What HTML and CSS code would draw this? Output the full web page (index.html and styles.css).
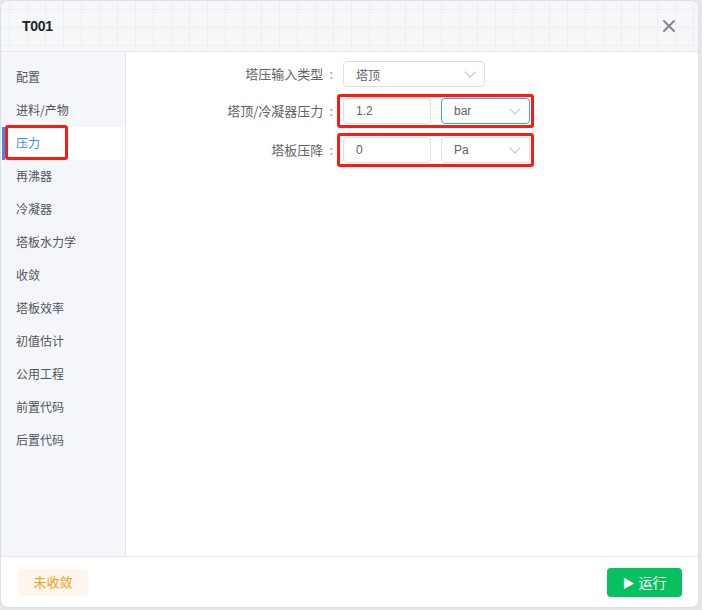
FILE: index.html
```html
<!DOCTYPE html>
<html lang="zh-CN">
<head>
  <meta charset="UTF-8" />
  <title>T001</title>
  <link rel="stylesheet" href="styles.css">
</head>
<body>
  <div class="dialog">
    <div class="dialog-header">
      <span class="title">T001</span>
      <span class="close">
        <svg width="12" height="12" viewBox="0 0 12 12"><path d="M1 1L11 11M11 1L1 11" stroke="#808389" stroke-width="1.8" stroke-linecap="round"/></svg>
      </span>
    </div>

    <div class="dialog-body">
      <ul class="side-menu">
        <li>配置</li>
        <li>进料/产物</li>
        <li class="active">压力<span class="mark mark-menu"></span></li>
        <li>再沸器</li>
        <li>冷凝器</li>
        <li>塔板水力学</li>
        <li>收敛</li>
        <li>塔板效率</li>
        <li>初值估计</li>
        <li>公用工程</li>
        <li>前置代码</li>
        <li>后置代码</li>
      </ul>

      <div class="content">
        <div class="form-row row-type">
          <label class="form-label">塔压输入类型</label>
          <div class="controls">
            <div class="select select-wide">
              <span>塔顶</span>
              <i class="arrow"></i>
            </div>
          </div>
        </div>

        <div class="form-row row-top">
          <label class="form-label">塔顶/冷凝器压力</label>
          <div class="controls marked">
            <div class="input">1.2</div>
            <div class="select focused">
              <span>bar</span>
              <i class="arrow"></i>
            </div>
          </div>
        </div>

        <div class="form-row row-drop">
          <label class="form-label">塔板压降</label>
          <div class="controls marked">
            <div class="input">0</div>
            <div class="select">
              <span>Pa</span>
              <i class="arrow"></i>
            </div>
          </div>
        </div>
      </div>
    </div>

    <div class="dialog-footer">
      <span class="tag-warn">未收敛</span>
      <button class="btn-run"><span class="play">▶</span>运行</button>
    </div>
  </div>
</body>
</html>
```

FILE: styles.css
```css
html, body {
  margin: 0;
  padding: 0;
}

body {
  background: #e6e7ea;
  font-family: "Noto Sans CJK SC", "Liberation Sans", sans-serif;
  width: 702px;
  height: 610px;
}

.dialog {
  width: 697px;
  height: 606px;
  background: #fff;
  border: 1px solid #dcdfe6;
  border-radius: 8px;
  display: flex;
  flex-direction: column;
  overflow: hidden;
}

/* 头部 */
.dialog-header {
  height: 50px;
  flex: none;
  display: flex;
  align-items: center;
  justify-content: space-between;
  padding: 0 23px 0 21px;
  border-bottom: 1px solid #e4e7ed;
  background-color: #f6f7f9;
  background-image:
    linear-gradient(to right, #eceef2 1px, transparent 1px),
    linear-gradient(to bottom, #eceef2 1px, transparent 1px);
  background-size: 18px 18px;
  background-position: 8px 8px;
}

.title {
  font-family: "Liberation Sans", sans-serif;
  font-weight: bold;
  font-size: 14px;
  color: #1d2129;
  letter-spacing: -0.3px;
}

.close {
  display: flex;
  width: 12px;
  height: 12px;
}

/* 主体 */
.dialog-body {
  flex: 1;
  display: flex;
  min-height: 0;
}

.side-menu {
  list-style: none;
  margin: 0;
  padding: 9px 0 0;
  width: 124px;
  flex: none;
  background: #f5f6fa;
  border-right: 1px solid #e4e7ed;
}

.side-menu li {
  position: relative;
  height: 33px;
  line-height: 31px;
  padding-left: 15px;
  font-size: 12px;
  color: #50555e;
}

.side-menu li.active {
  background: #fff;
  color: #3d8cf0;
}

.side-menu li.active::before {
  content: "";
  position: absolute;
  left: 1px;
  top: 0;
  bottom: 0;
  width: 3px;
  background: #3d8cf0;
}

/* 红色标注框 */
.mark {
  position: absolute;
  border: 3px solid #ff1a0f;
  border-radius: 3px;
  pointer-events: none;
}

.mark-menu {
  left: 4px;
  top: -2px;
  width: 57px;
  height: 29px;
}

.content {
  flex: 1;
  padding-top: 3px;
}

.form-row {
  display: flex;
  align-items: center;
}

.row-top { margin-top: 1px; }
.row-drop { margin-top: 5px; }

.form-label {
  width: 207px;
  padding-right: 4px;
  text-align: right;
  font-size: 13px;
  color: #606266;
  flex: none;
  margin-top: -1px;
}

.form-label::after {
  content: ":";
  margin-left: 6px;
  color: #909399;
}

.controls {
  display: flex;
  gap: 10px;
  padding: 3px 1px 3px 3px;
  border: 3px solid transparent;
  border-radius: 3px;
}

.controls.marked {
  border-color: #ff1a0f;
  padding-top: 1px;
  padding-bottom: 1px;
}

.input, .select {
  box-sizing: border-box;
  height: 26px;
  border: 1px solid #dcdfe6;
  border-radius: 4px;
  padding: 0 12px;
  font-size: 12px;
  color: #606266;
  display: flex;
  align-items: center;
  background: #fff;
}

.input {
  width: 88px;
  font-family: "Liberation Sans", sans-serif;
}

.select {
  width: 89px;
  justify-content: space-between;
  padding-right: 9px;
  font-family: "Liberation Sans", "Noto Sans CJK SC", sans-serif;
}

.select-wide {
  width: 142px;
  font-family: "Noto Sans CJK SC", sans-serif;
}

.select.focused {
  border-color: #409eff;
}

.arrow {
  width: 7px;
  height: 7px;
  border-right: 1px solid #c0c4cc;
  border-bottom: 1px solid #c0c4cc;
  transform: rotate(45deg);
  margin-top: -5px;
  margin-right: 1px;
}

/* 底部 */
.dialog-footer {
  height: 50px;
  flex: none;
  border-top: 1px solid #e4e7ed;
  display: flex;
  align-items: center;
  justify-content: space-between;
  padding: 0 16px 0 17px;
}

.tag-warn {
  width: 70px;
  height: 27px;
  line-height: 26px;
  text-align: center;
  background: #fdf6ec;
  color: #f0a020;
  font-size: 13px;
  border-radius: 4px;
}

.btn-run {
  width: 75px;
  height: 29px;
  border: none;
  border-radius: 4px;
  background: #07c160;
  color: #fff;
  font-family: "Noto Sans CJK SC", sans-serif;
  font-size: 14px;
  display: flex;
  align-items: center;
  justify-content: center;
  padding: 0;
}

.play {
  font-size: 12px;
  margin-right: 4px;
}
```
